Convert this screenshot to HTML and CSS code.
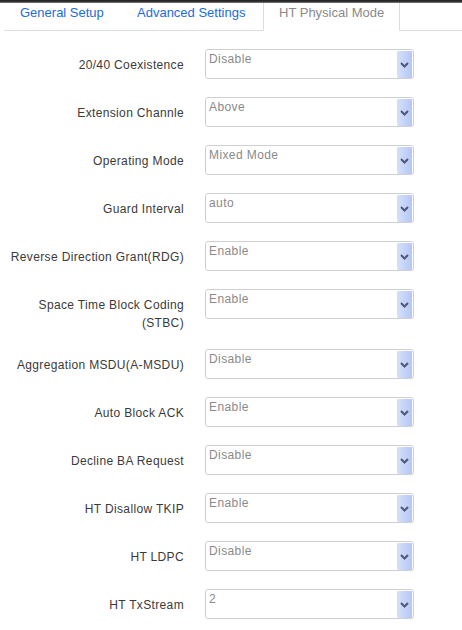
FILE: index.html
```html
<!DOCTYPE html>
<html>
<head>
<meta charset="utf-8">
<link rel="stylesheet" href="styles.css">
</head>
<body>
<div class="topbar"></div>
<div class="tabs">
  <a class="tab t1">General Setup</a>
  <a class="tab t2">Advanced Settings</a>
  <a class="tab t3 active">HT Physical Mode</a>
  <div class="tab-fill"></div>
</div>
<div class="form">
  <div class="row"><div class="label">20/40 Coexistence</div><div class="select"><span class="val">Disable</span><span class="btn"><svg width="9" height="6" viewBox="0 0 9 6"><polyline points="1,1 4.5,4.5 8,1" fill="none" stroke="#4a5a7c" stroke-width="2"/></svg></span></div></div>
  <div class="row"><div class="label">Extension Channle</div><div class="select"><span class="val">Above</span><span class="btn"><svg width="9" height="6" viewBox="0 0 9 6"><polyline points="1,1 4.5,4.5 8,1" fill="none" stroke="#4a5a7c" stroke-width="2"/></svg></span></div></div>
  <div class="row"><div class="label">Operating Mode</div><div class="select"><span class="val">Mixed Mode</span><span class="btn"><svg width="9" height="6" viewBox="0 0 9 6"><polyline points="1,1 4.5,4.5 8,1" fill="none" stroke="#4a5a7c" stroke-width="2"/></svg></span></div></div>
  <div class="row"><div class="label">Guard Interval</div><div class="select"><span class="val">auto</span><span class="btn"><svg width="9" height="6" viewBox="0 0 9 6"><polyline points="1,1 4.5,4.5 8,1" fill="none" stroke="#4a5a7c" stroke-width="2"/></svg></span></div></div>
  <div class="row"><div class="label">Reverse Direction Grant(RDG)</div><div class="select"><span class="val">Enable</span><span class="btn"><svg width="9" height="6" viewBox="0 0 9 6"><polyline points="1,1 4.5,4.5 8,1" fill="none" stroke="#4a5a7c" stroke-width="2"/></svg></span></div></div>
  <div class="row"><div class="label">Space Time Block Coding (STBC)</div><div class="select"><span class="val">Enable</span><span class="btn"><svg width="9" height="6" viewBox="0 0 9 6"><polyline points="1,1 4.5,4.5 8,1" fill="none" stroke="#4a5a7c" stroke-width="2"/></svg></span></div></div>
  <div class="row"><div class="label">Aggregation MSDU(A-MSDU)</div><div class="select"><span class="val">Disable</span><span class="btn"><svg width="9" height="6" viewBox="0 0 9 6"><polyline points="1,1 4.5,4.5 8,1" fill="none" stroke="#4a5a7c" stroke-width="2"/></svg></span></div></div>
  <div class="row"><div class="label">Auto Block ACK</div><div class="select"><span class="val">Enable</span><span class="btn"><svg width="9" height="6" viewBox="0 0 9 6"><polyline points="1,1 4.5,4.5 8,1" fill="none" stroke="#4a5a7c" stroke-width="2"/></svg></span></div></div>
  <div class="row"><div class="label">Decline BA Request</div><div class="select"><span class="val">Disable</span><span class="btn"><svg width="9" height="6" viewBox="0 0 9 6"><polyline points="1,1 4.5,4.5 8,1" fill="none" stroke="#4a5a7c" stroke-width="2"/></svg></span></div></div>
  <div class="row"><div class="label">HT Disallow TKIP</div><div class="select"><span class="val">Enable</span><span class="btn"><svg width="9" height="6" viewBox="0 0 9 6"><polyline points="1,1 4.5,4.5 8,1" fill="none" stroke="#4a5a7c" stroke-width="2"/></svg></span></div></div>
  <div class="row"><div class="label">HT LDPC</div><div class="select"><span class="val">Disable</span><span class="btn"><svg width="9" height="6" viewBox="0 0 9 6"><polyline points="1,1 4.5,4.5 8,1" fill="none" stroke="#4a5a7c" stroke-width="2"/></svg></span></div></div>
  <div class="row"><div class="label">HT TxStream</div><div class="select"><span class="val">2</span><span class="btn"><svg width="9" height="6" viewBox="0 0 9 6"><polyline points="1,1 4.5,4.5 8,1" fill="none" stroke="#4a5a7c" stroke-width="2"/></svg></span></div></div>
</div>
</body>
</html>
```
FILE: styles.css
```css
html, body {
  margin: 0;
  padding: 0;
  background: #fff;
  font-family: "Liberation Sans", Arial, sans-serif;
  overflow: hidden;
}
.topbar {
  height: 3px;
  background: linear-gradient(to bottom, #1e1e1e, #3a3a3a 60%, #8a8a8a);
}
.tabs {
  display: flex;
  margin-left: 4px;
  height: 28px;
}
.tab {
  display: block;
  font-size: 13px;
  line-height: 18px;
  padding: 1px 0 0 0;
  color: #1c6cd8;
  border-bottom: 1px solid #dcdcdc;
  height: 26px;
  box-sizing: content-box;
}
.t1 { width: 99px; padding-left: 16px; }
.t2 { width: 126px; padding-left: 18px; }
.t3 {
  width: 120px;
  padding-left: 15px;
  color: #8a8a8a;
  border-left: 1px solid #dcdcdc;
  border-right: 1px solid #dcdcdc;
  border-bottom-color: transparent;
}
.tab-fill {
  flex: 1;
  border-bottom: 1px solid #dcdcdc;
}
.form {
  padding-top: 18px;
}
.row {
  display: flex;
  align-items: flex-start;
  margin-bottom: 18px;
}
.label {
  width: 180px;
  margin-left: 4px;
  margin-right: 21px;
  margin-bottom: -1px;
  text-align: right;
  font-size: 12px;
  letter-spacing: 0.35px;
  line-height: 18px;
  padding-top: 7px;
  color: #3a3a3a;
}
.select {
  display: flex;
  width: 209px;
  height: 30px;
  box-sizing: border-box;
  border: 1px solid #cfcfcf;
  border-radius: 3px;
  padding: 1px 1px 0 3px;
}
.val {
  flex: 1;
  font-size: 12px;
  letter-spacing: 0.4px;
  line-height: 16px;
  color: #8a8a8a;
}
.btn {
  width: 15px;
  align-self: stretch;
  display: flex;
  align-items: center;
  justify-content: center;
  background: linear-gradient(to right, #d6e0fa, #b4c7f5);
  border-radius: 1px;
}
.btn svg { display: block; }
```
